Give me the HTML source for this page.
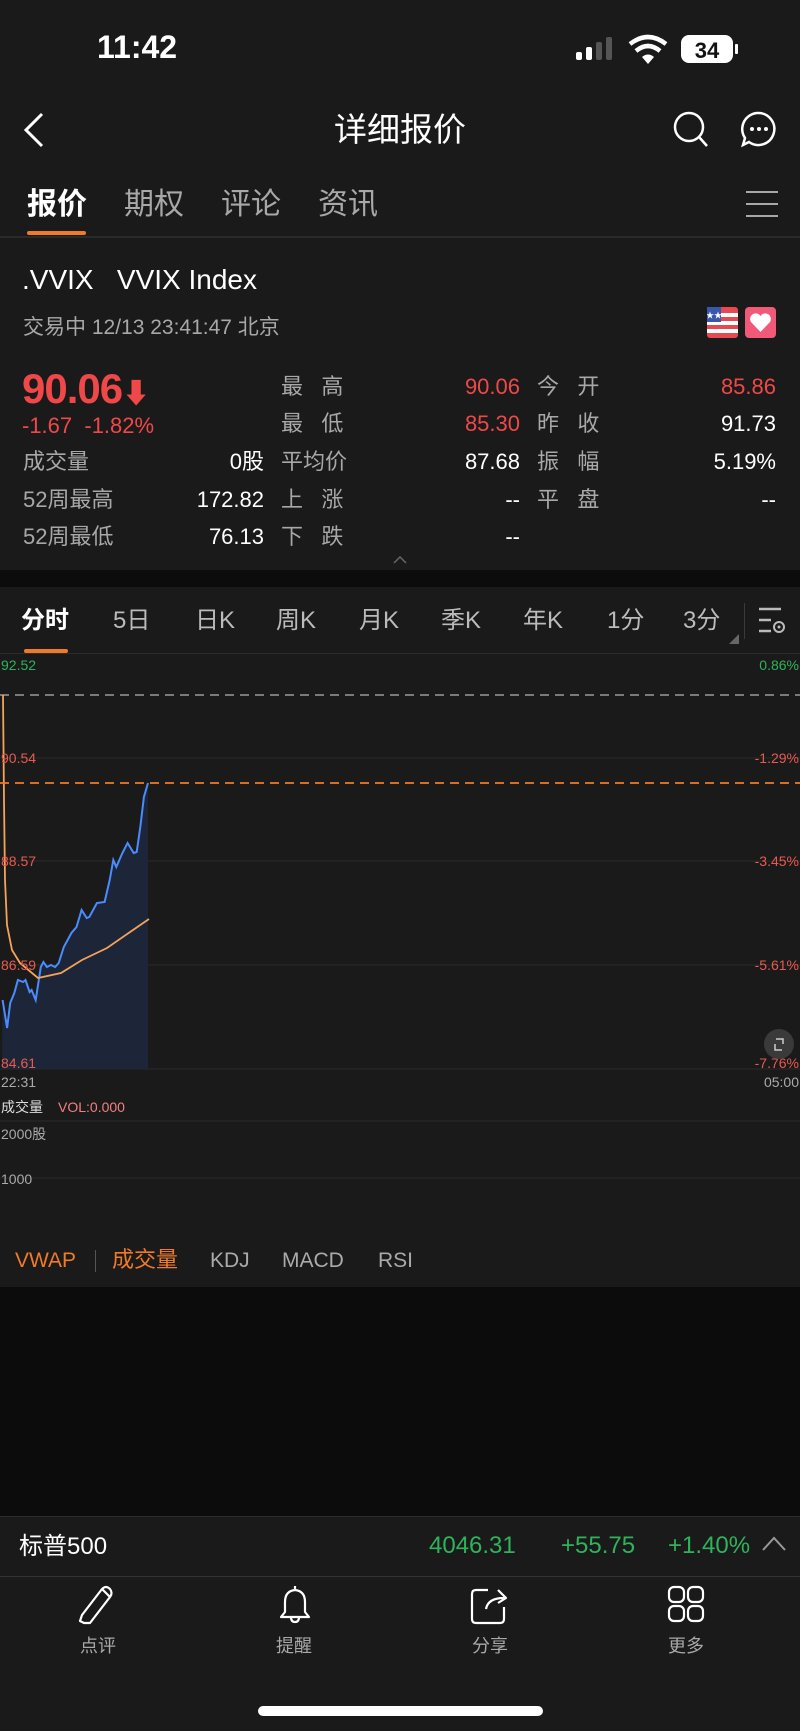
<!DOCTYPE html>
<html><head><meta charset="utf-8"><style>
*{margin:0;padding:0;box-sizing:border-box}
body{width:800px;height:1731px;background:#0c0c0c;font-family:"Liberation Sans","Noto Sans CJK SC",sans-serif;color:#fff;position:relative;overflow:hidden}
.a{position:absolute;white-space:nowrap}
.sec{position:absolute;left:0;width:800px;background:#1a1a1a}
.g{color:#a8a8a8}
.r{color:#f04848}
.gr{color:#2eb35a}
.lbl{font-size:22px;color:#a8a8a8;line-height:1}
.val{font-size:22px;line-height:1;text-align:right}
</style></head><body>
<div class="sec" style="top:0;height:570px"></div>
<div class="sec" style="top:587px;height:700px"></div>
<div class="sec" style="top:1516px;height:215px"></div>

<!-- status bar -->
<div class="a" style="left:97px;top:29px;font-size:32px;font-weight:bold;letter-spacing:0px">11:42</div>
<svg class="a" style="left:575px;top:34px" width="220" height="30" viewBox="0 0 220 30">
<rect x="1" y="18" width="6" height="8" rx="2" fill="#fff"/>
<rect x="11" y="13" width="6" height="13" rx="2" fill="#fff"/>
<rect x="21" y="8" width="6" height="18" rx="2" fill="#555"/>
<rect x="31" y="3" width="6" height="23" rx="2" fill="#555"/>
<path d="M55 10 Q73 -4 91 10" stroke="#fff" stroke-width="4.5" fill="none"/>
<path d="M61 17 Q73 7 85 17" stroke="#fff" stroke-width="4.5" fill="none"/>
<path d="M67 23 L73 30 L79 23 Q73 18 67 23Z" fill="#fff"/>
<rect x="106" y="1" width="52" height="28" rx="8" fill="#fff"/>
<rect x="160" y="10" width="3" height="10" rx="1" fill="#fff"/>
<text x="132" y="24" font-size="22" font-weight="bold" text-anchor="middle" fill="#111" font-family="Liberation Sans">34</text>
</svg>

<!-- nav -->
<svg class="a" style="left:22px;top:112px" width="24" height="36"><path d="M20 2 L4 18 L20 34" stroke="#fff" stroke-width="3" fill="none"/></svg>
<div class="a" style="left:0;width:800px;text-align:center;top:103px;font-size:33px">详细报价</div>
<svg class="a" style="left:672px;top:110px" width="40" height="40"><circle cx="17" cy="17" r="14" stroke="#fff" stroke-width="2.5" fill="none"/><path d="M27 27 L35 36" stroke="#fff" stroke-width="2.5"/></svg>
<svg class="a" style="left:740px;top:110px" width="40" height="40"><path d="M18 3 A16 16 0 1 1 9 32 L3 35 L5 28 A16 16 0 0 1 18 3Z" stroke="#fff" stroke-width="2.5" fill="none"/><circle cx="12" cy="19" r="2" fill="#fff"/><circle cx="19" cy="19" r="2" fill="#fff"/><circle cx="26" cy="19" r="2" fill="#fff"/></svg>

<!-- tabs -->
<div class="a" style="left:27px;top:179px;font-size:30px;font-weight:bold">报价</div>
<div class="a g" style="left:124px;top:179px;font-size:30px">期权</div>
<div class="a g" style="left:221px;top:179px;font-size:30px">评论</div>
<div class="a g" style="left:318px;top:179px;font-size:30px">资讯</div>
<div class="a" style="left:27px;top:231px;width:59px;height:4px;border-radius:2px;background:#f07a28"></div>
<svg class="a" style="left:746px;top:190px" width="32" height="28"><path d="M0 2H32M0 14H32M0 26H32" stroke="#a8a8a8" stroke-width="2"/></svg>
<div class="a" style="left:0;top:236px;width:800px;height:2px;background:#2a2a2a"></div>

<!-- quote -->
<div class="a" style="left:22px;top:264px;font-size:28px">.VVIX&nbsp;&nbsp;&nbsp;VVIX Index</div>
<div class="a g" style="left:23px;top:311px;font-size:21px">交易中 12/13 23:41:47 北京</div>
<svg class="a" style="left:707px;top:307px" width="31" height="31"><rect width="31" height="31" rx="3" fill="#e84850"/><rect y="6" width="31" height="4" fill="#fff"/><rect y="14" width="31" height="4" fill="#fff"/><rect y="22" width="31" height="4" fill="#fff"/><rect width="14" height="15" fill="#3a57b0"/><text x="7" y="11" font-size="8" fill="#fff" text-anchor="middle">★★</text></svg>
<svg class="a" style="left:745px;top:307px" width="31" height="31"><rect width="31" height="31" rx="4" fill="#f05a78"/><path d="M15.5 25 L6 15 A5 5 0 0 1 15.5 9 A5 5 0 0 1 25 15Z" fill="#fff"/></svg>

<div class="a r" style="left:22px;top:365px;font-size:42px;font-weight:bold;letter-spacing:-1px">90.06<span style="font-size:28px">⬇</span></div>
<div class="a r" style="left:22px;top:413px;font-size:22px">-1.67&nbsp;&nbsp;-1.82%</div>
<div class="a lbl" style="left:23px;top:451px">成交量</div>
<div class="a lbl" style="left:23px;top:489px">52周最高</div>
<div class="a lbl" style="left:23px;top:526px">52周最低</div>
<div class="a val" style="right:536px;top:451px">0股</div>
<div class="a val" style="right:536px;top:489px">172.82</div>
<div class="a val" style="right:536px;top:526px">76.13</div>

<div class="a lbl" style="left:281px;top:376px;word-spacing:0">最&nbsp;&nbsp;&nbsp;高</div>
<div class="a lbl" style="left:281px;top:413px">最&nbsp;&nbsp;&nbsp;低</div>
<div class="a lbl" style="left:281px;top:451px">平均价</div>
<div class="a lbl" style="left:281px;top:489px">上&nbsp;&nbsp;&nbsp;涨</div>
<div class="a lbl" style="left:281px;top:526px">下&nbsp;&nbsp;&nbsp;跌</div>
<div class="a val r" style="right:280px;top:376px">90.06</div>
<div class="a val r" style="right:280px;top:413px">85.30</div>
<div class="a val" style="right:280px;top:451px">87.68</div>
<div class="a val" style="right:280px;top:489px">--</div>
<div class="a val" style="right:280px;top:526px">--</div>

<div class="a lbl" style="left:537px;top:376px">今&nbsp;&nbsp;&nbsp;开</div>
<div class="a lbl" style="left:537px;top:413px">昨&nbsp;&nbsp;&nbsp;收</div>
<div class="a lbl" style="left:537px;top:451px">振&nbsp;&nbsp;&nbsp;幅</div>
<div class="a lbl" style="left:537px;top:489px">平&nbsp;&nbsp;&nbsp;盘</div>
<div class="a val r" style="right:24px;top:376px">85.86</div>
<div class="a val" style="right:24px;top:413px">91.73</div>
<div class="a val" style="right:24px;top:451px">5.19%</div>
<div class="a val" style="right:24px;top:489px">--</div>
<svg class="a" style="left:393px;top:556px" width="14" height="8"><path d="M1 7 L7 1 L13 7" stroke="#666" stroke-width="1.5" fill="none"/></svg>

<!-- chart tabs -->
<div class="a" style="left:21px;top:600px;font-size:24px;font-weight:bold">分时</div>
<div class="a" style="left:0;top:600px;font-size:24px;color:#bbb">
<span class="a" style="left:113px">5日</span><span class="a" style="left:195px">日K</span><span class="a" style="left:276px">周K</span><span class="a" style="left:359px">月K</span><span class="a" style="left:441px">季K</span><span class="a" style="left:523px">年K</span><span class="a" style="left:607px">1分</span><span class="a" style="left:683px">3分</span></div>
<svg class="a" style="left:729px;top:634px" width="10" height="10"><path d="M10 0V10H0Z" fill="#666"/></svg>
<div class="a" style="left:744px;top:603px;width:1px;height:36px;background:#3a3a3a"></div>
<svg class="a" style="left:757px;top:607px" width="30" height="28"><path d="M2 2H24M2 13H14M2 24H14" stroke="#bbb" stroke-width="2.5"/><circle cx="22" cy="20" r="5" stroke="#bbb" stroke-width="2" fill="none"/><circle cx="22" cy="20" r="1.5" fill="#bbb"/></svg>
<div class="a" style="left:24px;top:649px;width:44px;height:4px;border-radius:2px;background:#f07a28"></div>
<div class="a" style="left:0;top:653px;width:800px;height:1px;background:#2c2c2c"></div>

<!-- chart -->
<svg class="a" style="left:0;top:0" width="800" height="1300">
<g stroke="#2a2a2a" stroke-width="1">
<line x1="0" y1="758" x2="800" y2="758"/><line x1="0" y1="861" x2="800" y2="861"/><line x1="0" y1="965" x2="800" y2="965"/><line x1="0" y1="1069" x2="800" y2="1069"/>
<line x1="0" y1="1121" x2="800" y2="1121"/><line x1="0" y1="1178" x2="800" y2="1178"/>
</g>
<line x1="0" y1="695" x2="800" y2="695" stroke="#999" stroke-width="1.5" stroke-dasharray="9 6"/>
<path d="M2.6 1000 L7.1 1028 L10.2 1003 L14.3 993 L17.9 980 L23 982 L25.5 980 L29.6 992 L31.6 990 L35.7 1000 L40.8 967 L43.4 962 L46.9 967 L51 965 L55.1 967 L58.7 963 L63.8 947 L71.4 933 L76.5 927 L81.6 910 L86.7 918 L89.3 917 L96.9 903 L104.6 902 L109.7 880 L113.3 860 L116.3 867 L122.4 853 L127.6 843 L133.7 853 L136.7 852 L140.3 827 L143.9 797 L148 783 L148 1069 L2 1069Z" fill="#1d2638"/>
<path d="M2.6 1000 L7.1 1028 L10.2 1003 L14.3 993 L17.9 980 L23 982 L25.5 980 L29.6 992 L31.6 990 L35.7 1000 L40.8 967 L43.4 962 L46.9 967 L51 965 L55.1 967 L58.7 963 L63.8 947 L71.4 933 L76.5 927 L81.6 910 L86.7 918 L89.3 917 L96.9 903 L104.6 902 L109.7 880 L113.3 860 L116.3 867 L122.4 853 L127.6 843 L133.7 853 L136.7 852 L140.3 827 L143.9 797 L148 783" stroke="#4a8cff" stroke-width="2" fill="none"/>
<path d="M3 695 L4 800 L5 880 L7 925 L12 950 L20 963 L38 978 L61 973 L82 960 L107 948 L133 930 L149 919" stroke="#f5a35a" stroke-width="1.8" fill="none"/>
<line x1="0" y1="783" x2="800" y2="783" stroke="#f07a28" stroke-width="1.8" stroke-dasharray="9 6"/>
<g font-family="Liberation Sans" font-size="14">
<text x="1" y="670" fill="#2eb35a">92.52</text><text x="799" y="670" fill="#2eb35a" text-anchor="end">0.86%</text>
<text x="1" y="763" fill="#e85a4f">90.54</text><text x="799" y="763" fill="#e85a4f" text-anchor="end">-1.29%</text>
<text x="1" y="866" fill="#e85a4f">88.57</text><text x="799" y="866" fill="#e85a4f" text-anchor="end">-3.45%</text>
<text x="1" y="970" fill="#e85a4f">86.59</text><text x="799" y="970" fill="#e85a4f" text-anchor="end">-5.61%</text>
<text x="1" y="1068" fill="#e85a4f">84.61</text><text x="799" y="1068" fill="#e85a4f" text-anchor="end">-7.76%</text>
<text x="1" y="1087" fill="#aaa">22:31</text><text x="799" y="1087" fill="#aaa" text-anchor="end">05:00</text>
<text x="1" y="1112" fill="#ddd" font-family="Liberation Sans,Noto Sans CJK SC">成交量</text><text x="58" y="1112" fill="#f08080">VOL:0.000</text>
<text x="1" y="1139" fill="#aaa" font-family="Liberation Sans,Noto Sans CJK SC">2000股</text>
<text x="1" y="1184" fill="#aaa">1000</text>
</g>
<circle cx="779" cy="1044" r="15" fill="#3a3a3a"/>
<path d="M776 1039 H783 V1044 M775 1044 V1050 H782" stroke="#ccc" stroke-width="1.5" fill="none"/>
</svg>

<div class="a" style="left:15px;top:1249px;font-size:21px;color:#f07a28">VWAP</div>
<div class="a" style="left:95px;top:1250px;width:1px;height:22px;background:#555"></div>
<div class="a" style="left:112px;top:1242px;font-size:22px;color:#f07a28">成交量</div>
<div class="a" style="left:210px;top:1249px;font-size:21px;color:#aaa">KDJ</div>
<div class="a" style="left:282px;top:1249px;font-size:21px;color:#aaa">MACD</div>
<div class="a" style="left:378px;top:1249px;font-size:21px;color:#aaa">RSI</div>

<!-- bottom -->
<div class="a" style="left:0;top:1516px;width:800px;height:1px;background:#2c2c2c"></div>
<div class="a" style="left:19px;top:1526px;font-size:24px">标普500</div>
<div class="a gr" style="left:429px;top:1532px;font-size:24px">4046.31</div>
<div class="a gr" style="left:561px;top:1532px;font-size:24px">+55.75</div>
<div class="a gr" style="left:668px;top:1532px;font-size:24px">+1.40%</div>
<svg class="a" style="left:762px;top:1536px" width="24" height="16"><path d="M1 14 L12 2 L23 14" stroke="#999" stroke-width="2" fill="none"/></svg>
<div class="a" style="left:0;top:1576px;width:800px;height:1px;background:#333"></div>

<svg class="a" style="left:78px;top:1585px" width="40" height="40"><path d="M6 38 L2 36 L4 30 L24 4 Q28 0 32 4 Q35 8 32 12 L12 38 Z M24 4 L32 12" stroke="#fff" stroke-width="2.2" fill="none" stroke-linejoin="round"/></svg>
<svg class="a" style="left:275px;top:1584px" width="40" height="42"><path d="M20 2 V6 M10 28 V18 Q10 7 20 6 Q30 7 30 18 V28 L34 33 H6 Z M16 33 Q16 38 20 38 Q24 38 24 33" stroke="#fff" stroke-width="2.2" fill="none" stroke-linejoin="round"/></svg>
<svg class="a" style="left:470px;top:1585px" width="40" height="40"><path d="M18 5 H6 Q2 5 2 9 V34 Q2 38 6 38 H30 Q34 38 34 34 V22 M16 24 Q18 13 34 13 M28 5 L36 13 L28 18" stroke="#fff" stroke-width="2.2" fill="none" stroke-linejoin="round"/></svg>
<svg class="a" style="left:667px;top:1585px" width="40" height="40"><g stroke="#fff" stroke-width="2.2" fill="none"><rect x="2" y="2" width="15" height="15" rx="5"/><rect x="21" y="2" width="15" height="15" rx="5"/><rect x="2" y="21" width="15" height="15" rx="5"/><rect x="21" y="21" width="15" height="15" rx="5"/></g></svg>
<div class="a g" style="left:80px;top:1632px;font-size:18px">点评</div>
<div class="a g" style="left:276px;top:1632px;font-size:18px">提醒</div>
<div class="a g" style="left:472px;top:1632px;font-size:18px">分享</div>
<div class="a g" style="left:668px;top:1632px;font-size:18px">更多</div>
<div class="a" style="left:258px;top:1706px;width:285px;height:10px;border-radius:5px;background:#fff"></div>
</body></html>
